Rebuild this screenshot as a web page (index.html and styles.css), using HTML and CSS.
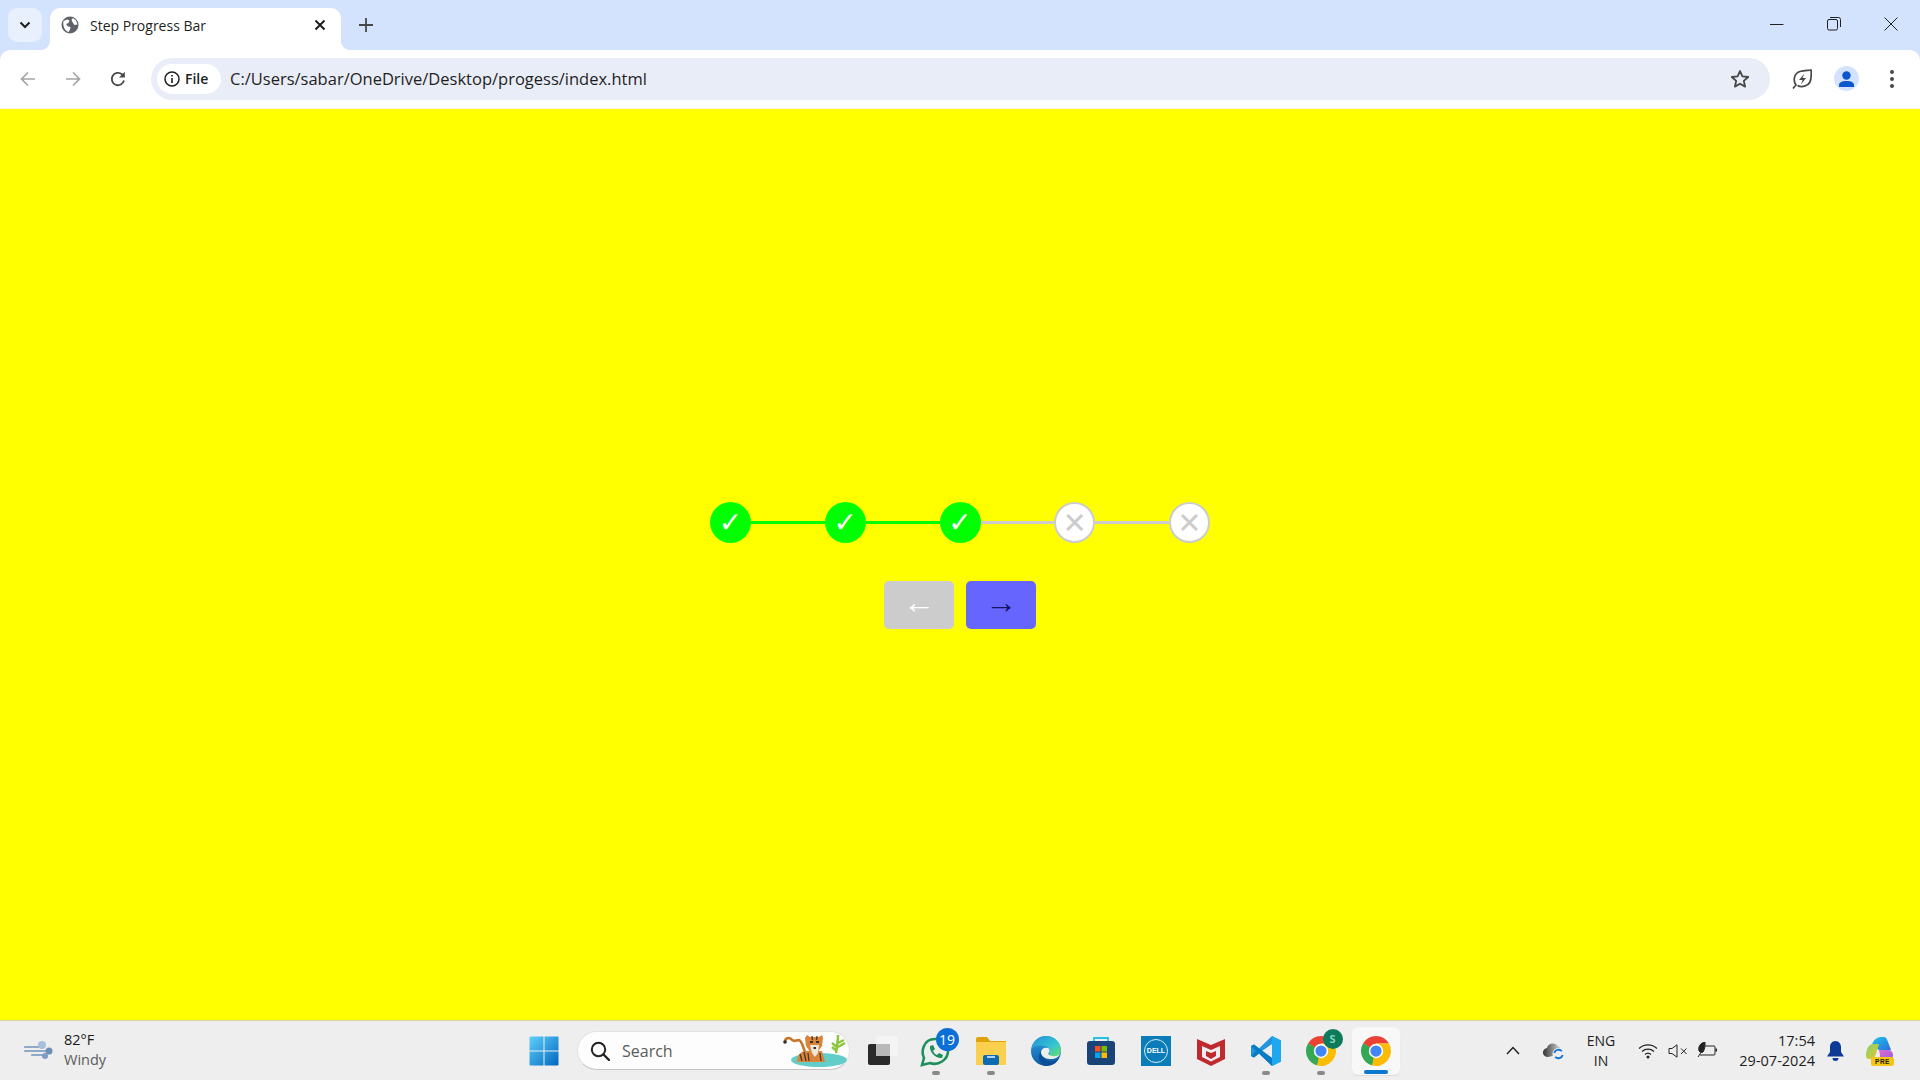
FILE: index.html
```html
<!DOCTYPE html>
<html lang="en">
<head>
<meta charset="utf-8">
<title>Step Progress Bar</title>
<link rel="stylesheet" href="styles.css">
</head>
<body>
<div class="window">
  <div class="browser-top">
  <header class="titlebar">
    <button class="tab-search"><svg width="12" height="8" viewBox="0 0 12 8"><path d="M1.500 1.500 6 6l4.500-4.500" fill="none" stroke="#1f1f1f" stroke-width="2"/></svg></button>
    <div class="tab">
      <svg class="globe" width="18" height="18" viewBox="0 0 18 18"><circle cx="9" cy="9" r="8.500" fill="#5f6368"/><path d="M2.500 5 6 3.500l2.500 1-1 2.500-2.500 1 2 2.500 2.500.5-.5 2.500-1.500 2.500C4 15 1.500 10 2.500 5ZM12 2l3 2.500 1.500 4-3 .5-1.500-2L10.500 4Z" fill="#fff"/></svg>
      <span class="tab-title">Step Progress Bar</span>
      <svg class="tab-x" width="12" height="12" viewBox="0 0 12 12"><path d="M1.500 1.500l9 9m0-9-9 9" stroke="#1f1f1f" stroke-width="2"/></svg>
    </div>
    <svg class="newtab" width="14" height="14" viewBox="0 0 14 14"><path d="M7 0v14M0 7h14" stroke="#444746" stroke-width="1.800"/></svg>
    <div class="win-controls">
      <svg width="14" height="14" viewBox="0 0 14 14"><path d="M0 7.500h13.500" stroke="#222" stroke-width="1"/></svg>
      <svg width="14" height="14" viewBox="0 0 14 14"><rect x=".5" y="2.500" width="10" height="10.500" rx="1.500" fill="none" stroke="#222"/><path d="M3 .5h8.500a2 2 0 0 1 2 2V10" fill="none" stroke="#222"/></svg>
      <svg width="14" height="14" viewBox="0 0 14 14"><path d="M.5.5l13 13m0-13-13 13" stroke="#222" stroke-width="1"/></svg>
    </div>
  </header>
  <nav class="toolbar">
    <svg class="nav-ico" width="16" height="16" viewBox="0 0 16 16"><path d="M15 8H2M8 1.500 1.500 8 8 14.500" fill="none" stroke="#a3a5a8" stroke-width="1.700"/></svg>
    <svg class="nav-ico" width="16" height="16" viewBox="0 0 16 16"><path d="M1 8h13M8 1.500 14.500 8 8 14.500" fill="none" stroke="#a3a5a8" stroke-width="1.700"/></svg>
    <svg class="nav-ico" width="16" height="16" viewBox="0 0 16 16"><path d="M14 9.500A6.200 6.200 0 1 1 12 3.300L14 5.500" fill="none" stroke="#474747" stroke-width="1.800"/><path d="M14.800 .8v5.700H9z" fill="#474747"/></svg>
    <div class="omnibox">
      <div class="chip">
        <svg width="16" height="16" viewBox="0 0 16 16"><circle cx="8" cy="8" r="7" fill="none" stroke="#1f1f1f" stroke-width="1.500"/><path d="M8 7v5M8 4v1.600" stroke="#1f1f1f" stroke-width="1.600"/></svg>
        <span>File</span>
      </div>
      <span class="url">C:/Users/sabar/OneDrive/Desktop/progess/index.html</span>
      <svg class="star" width="20" height="20" viewBox="0 0 20 20"><path d="M10 2l2.400 5.400 5.800.6-4.400 3.900 1.300 5.700L10 14.700 4.900 17.600l1.300-5.700L1.800 8l5.800-.6z" fill="none" stroke="#474747" stroke-width="1.800" stroke-linejoin="round"/></svg>
    </div>
    <div class="tool-icons">
      <svg width="20" height="20" viewBox="0 0 20 20"><path d="M1 19.500l3-3.500C.5 11 2.500 4 8 2.500c3.500-1 7-1 11-1.500.5 4 .5 8-1 12-2 4-8 6-12.500 3.500" fill="none" stroke="#474747" stroke-width="1.700"/><path d="M12.500 4.500 7 11h3.500L9 15.500l5-6.500h-3.500z" fill="#474747"/></svg>
      <div class="avatar"><svg width="17" height="16" viewBox="0 0 17 16"><circle cx="8.500" cy="4.500" r="4.200" fill="#0b57d0"/><path d="M1 16v-2c0-2.500 3-4 7.500-4s7.500 1.500 7.500 4v2z" fill="#0b57d0"/></svg></div>
      <svg class="menu-dots" width="6" height="20" viewBox="0 0 6 20"><circle cx="3" cy="3" r="2" fill="#474747"/><circle cx="3" cy="10" r="2" fill="#474747"/><circle cx="3" cy="17" r="2" fill="#474747"/></svg>
    </div>
  </nav>
  </div>
  <main class="page">
    <div class="stepper">
      <div class="step done"><span>✓</span></div>
      <div class="line on"></div>
      <div class="step done"><span>✓</span></div>
      <div class="line on"></div>
      <div class="step done"><span>✓</span></div>
      <div class="line"></div>
      <div class="step todo"><span>✕</span></div>
      <div class="line"></div>
      <div class="step todo"><span>✕</span></div>
    </div>
    <div class="buttons">
      <button class="btn prev">←</button>
      <button class="btn next">→</button>
    </div>
  </main>
  <footer class="taskbar">
    <div class="weather">
      <svg width="30" height="20" viewBox="0 0 30 20"><path d="M1 7h15M1 11h26M8 15h12" stroke="#8fa9c9" stroke-width="2.200" stroke-linecap="round"/><circle cx="18" cy="5" r="4" fill="#a6bfdc"/><circle cx="25" cy="11" r="3.500" fill="#6d8fb5"/><circle cx="21" cy="16" r="3" fill="#7f9dc0"/></svg>
      <div class="weather-text"><span class="temp">82°F</span><span class="cond">Windy</span></div>
    </div>
    <div class="center">
      <div class="tb-item">
        <svg width="30" height="30" viewBox="0 0 30 30"><defs><linearGradient id="w" x1="0" y1="0" x2="1" y2="1"><stop offset="0" stop-color="#5fd0fb"/><stop offset="1" stop-color="#0067c0"/></linearGradient></defs><path d="M.5 1.500a1 1 0 0 1 1-1h13v14H.5zM15.500.5h13a1 1 0 0 1 1 1v13h-14zM.5 15.500h14v14h-13a1 1 0 0 1-1-1zM15.500 15.500h14v13a1 1 0 0 1-1 1h-13z" fill="url(#w)"/></svg>
      </div>
      <div class="search">
        <svg width="20" height="20" viewBox="0 0 20 20"><circle cx="8.500" cy="8.500" r="6.700" fill="none" stroke="#222" stroke-width="2"/><path d="M13.500 13.500 19 19" stroke="#222" stroke-width="2.400" stroke-linecap="round"/></svg>
        <span>Search</span>
        <svg class="tiger" width="66" height="34" viewBox="0 0 66 34"><ellipse cx="38" cy="27" rx="28" ry="7" fill="#62cdc9"/><path d="M55 20c1-6 2-12 2-18M57 10l6-3M57 14l7-4M56 14l-5-4M56 18l-5-4" stroke="#8cc63f" stroke-width="2.500" fill="none"/><path d="M4 9c0-4 4-5 6-3 3 4 5 1 8 1 3 1 4 7 6 12" fill="none" stroke="#c9762c" stroke-width="2.600"/><circle cx="4" cy="9" r="1.800" fill="#33302e"/><path d="M16 29c0-7 4-11 9-11h16l3 11z" fill="#d9843a"/><path d="M26 2l3 2h9l3-2 1 3-1 8-5 7h-6l-5-7-1-8z" fill="#d9843a"/><path d="M29 12h9l-1 8-3 4-3-4z" fill="#eee7dc"/><path d="M29 8h3v2h-3zM35 8h3v2h-3zM32.500 14h2.500v2h-2.500z" fill="#33302e"/><path d="M19 21l2 7M23 19l2 9M27 20l1 8M39 20l1 8M31 3l.5 4M36 3l-.5 4" stroke="#4a3a2a" stroke-width="1.300"/></svg>
      </div>
      <div class="tb-item taskview">
        <svg width="30" height="30" viewBox="0 0 30 30"><rect x="8" y="0" width="22" height="20" rx="2" fill="#f4f4f4"/><rect x="0" y="8" width="22" height="21" rx="2" fill="#2a2a2a"/><rect x="8" y="8" width="14" height="12" fill="#b8b8b8"/></svg>
      </div>
      <div class="tb-item pinned">
        <svg width="32" height="32" viewBox="0 0 32 32"><path d="M2 30l2-7C1 17 3 4 15 4c8 0 13 6 13 12 0 9-10 15-18 12z" fill="#eeeeee" stroke="#1d8f5b" stroke-width="2.600"/><path d="M10 11l3-1 2 4-2 2c1 2 2 3 4 4l2-2 4 2-1 3c-6 1-13-6-12-12z" fill="#1d8f5b"/></svg>
        <span class="badge">19</span>
        <i class="dot"></i>
      </div>
      <div class="tb-item pinned">
        <svg width="30" height="28" viewBox="0 0 30 28"><path d="M0 2a2 2 0 0 1 2-2h9l3 4h16v3H0z" fill="#e1a10d"/><path d="M0 5h30v23H0z" fill="#fcd04f"/><rect x="7" y="18" width="16" height="10" rx="2" fill="#0d6bb2"/><path d="M11 20h8" stroke="#eef5fb" stroke-width="1.500"/></svg>
        <i class="dot"></i>
      </div>
      <div class="tb-item">
        <svg width="30" height="30" viewBox="0 0 30 30"><defs><linearGradient id="e1" x1="0" y1="0" x2="1" y2="1"><stop offset="0" stop-color="#1f8fd8"/><stop offset=".6" stop-color="#37c6d0"/><stop offset="1" stop-color="#6ee05a"/></linearGradient><linearGradient id="e2" x1="0" y1="0" x2="0" y2="1"><stop offset="0" stop-color="#2f9fe0"/><stop offset="1" stop-color="#0a5ea8"/></linearGradient></defs><circle cx="15" cy="15" r="15" fill="url(#e2)"/><path d="M.5 13C2 5 8 0 15 0c9 0 15 7 15 14 0 5-4 7-8 7-3 0-5-1-5-2 3-2 2-8-3-9C9 9 3 9 .5 13z" fill="url(#e1)"/><path d="M10 15c0 6 5 10 10 10 3 0 6-1 8-3-2 5-7 8-13 8-3 0-5-2-6-4-2-4-1-9 1-11z" fill="#0d4f96"/><path d="M10 17c0-4 3-6 7-5 2 1 2 4 0 6 3 3 9 3 12 0-1 3-5 5-9 5-5 0-9-2-10-6z" fill="#eeeeee"/></svg>
      </div>
      <div class="tb-item">
        <svg width="30" height="30" viewBox="0 0 30 30"><path d="M8 5V2h14v3" fill="none" stroke="#27c1e8" stroke-width="1.800"/><path d="M1 8a3 3 0 0 1 3-3h22a3 3 0 0 1 3 3v18a3 3 0 0 1-3 3H4a3 3 0 0 1-3-3z" fill="#1a4478"/><rect x="9" y="10" width="5.500" height="5.500" fill="#f25022"/><rect x="15.500" y="10" width="5.500" height="5.500" fill="#7fba00"/><rect x="9" y="16.500" width="5.500" height="5.500" fill="#00a4ef"/><rect x="15.500" y="16.500" width="5.500" height="5.500" fill="#ffb900"/></svg>
      </div>
      <div class="tb-item">
        <div class="dell"><span>DELL</span></div>
      </div>
      <div class="tb-item">
        <svg width="28" height="30" viewBox="0 0 28 30"><path d="M0 3l14 6 14-6v20l-14 7L0 23z" fill="#c02a2e"/><path d="M5 10l9 4 9-4v11l-9 4.500L5 21z" fill="#eeeeee"/><path d="M9 15l5 2 5-2v5l-5 3-5-3z" fill="#c02a2e"/></svg>
      </div>
      <div class="tb-item pinned">
        <svg width="30" height="30" viewBox="0 0 30 30"><path d="M21 0l9 4.500v21L21 30 8 17.500 3 21.500 0 20V10l3-1.500 5 4z" fill="#2195e0"/><path d="M21 0l9 4.500v21L21 30z" fill="#1fa8f0"/><path d="M21 8 11 15l10 7z" fill="#eeeeee"/><path d="M0 10l3-1.500L21 22v8L8 17.500 3 21.500 0 20l5-5z" fill="#0a7cc6"/></svg>
        <i class="dot"></i>
      </div>
      <div class="tb-item pinned">
        <svg class="chrome" width="30" height="30" viewBox="0 0 48 48"><use href="#chrome-art"/></svg>
        <span class="s-badge">S</span>
        <i class="dot"></i>
      </div>
      <div class="tb-item active">
        <svg class="chrome" width="30" height="30" viewBox="0 0 48 48"><g id="chrome-art"><path d="M24 24 3.200 12A24 24 0 0 1 24 0c9 0 17 5 20.800 12H24z" fill="#ea4335"/><path d="M3.200 12A24 24 0 0 0 18 47.200L24 24z" fill="#34a853"/><path d="M44.800 12H24l-6 35.200A24 24 0 0 0 44.800 12z" fill="#fbbc04"/><path d="M3.200 12 14 30.500 24 24z" fill="#34a853"/><circle cx="24" cy="24" r="11.500" fill="#fff"/><circle cx="24" cy="24" r="9" fill="#4285f4"/></g></svg>
        <i class="bar"></i>
      </div>
    </div>
    <div class="tray">
      <svg class="t-chev" width="14" height="9" viewBox="0 0 14 9"><path d="M1 8l6-6.500L13 8" fill="none" stroke="#222" stroke-width="1.500"/></svg>
      <svg class="t-cloud" width="22" height="18" viewBox="0 0 22 18"><defs><linearGradient id="cl" x1="0" y1="0" x2="1" y2="0"><stop offset="0" stop-color="#333"/><stop offset="1" stop-color="#d8d8d8"/></linearGradient></defs><path d="M5 15a4.500 4.500 0 0 1-1-9 6 6 0 0 1 11-1.500c3 0 4 4 1 8z" fill="url(#cl)"/><circle cx="15.500" cy="12" r="6" fill="#eeeeee"/><path d="M11.300 11a4.400 4.400 0 0 1 7.500-1.800M19.700 13a4.400 4.400 0 0 1-7.500 1.800" fill="none" stroke="#0f74d8" stroke-width="1.800"/></svg>
      <div class="lang"><span>ENG</span><span>IN</span></div>
      <svg class="t-wifi" width="20" height="16" viewBox="0 0 20 16"><path d="M1 5.500a13 13 0 0 1 18 0M4 8.500a9 9 0 0 1 12 0M7 11.500a4.500 4.500 0 0 1 6 0" fill="none" stroke="#222" stroke-width="1.200"/><circle cx="10" cy="14" r="1.500" fill="#222"/></svg>
      <svg class="t-vol" width="20" height="14" viewBox="0 0 20 14"><path d="M1 4.500h3L9 .8v12.400L4 9.500H1z" fill="none" stroke="#222" stroke-width="1"/><path d="M13 4.500l5.500 5.500m0-5.500L13 10" stroke="#222" stroke-width="1"/></svg>
      <svg class="t-bat" width="20" height="17" viewBox="0 0 20 17"><path d="M8 4h9a1 1 0 0 1 1 1v7a1 1 0 0 1-1 1H3" fill="none" stroke="#222"/><path d="M18.500 6.500H20v3h-1.500z" fill="#222"/><path d="M8 0C3 1 1 5 2 9c1 1.500 3 1.500 4 1 2-3 2-6 2-10zM1 15l4-6" fill="#222" stroke="#222"/></svg>
      <div class="clock"><span>17:54</span><span>29-07-2024</span></div>
      <svg class="t-bell" width="17" height="20" viewBox="0 0 17 20"><path d="M8.500 0c-3.500 0-5.500 3-5.500 6v5L0 15.500h17L14 11V6c0-3-2-6-5.500-6z" fill="#0d3a94"/><path d="M5.500 17a3 3 0 0 0 6 0z" fill="#0d3a94"/></svg>
      <svg class="t-copilot" width="30" height="30" viewBox="0 0 30 30"><defs><linearGradient id="c1" x1="0" y1="0" x2="1" y2="1"><stop offset="0" stop-color="#20c4e8"/><stop offset="1" stop-color="#2a6fe0"/></linearGradient><linearGradient id="c2" x1="0" y1="0" x2="1" y2="1"><stop offset="0" stop-color="#7bd46a"/><stop offset="1" stop-color="#f2c230"/></linearGradient><linearGradient id="c3" x1="0" y1="0" x2="1" y2="1"><stop offset="0" stop-color="#e56bd0"/><stop offset="1" stop-color="#8f5ce0"/></linearGradient></defs><path d="M7 9c1-5 5-8 9-8h3c2 0 3 2 4 5l3 8H14z" fill="url(#c1)"/><path d="M1 20C1 13 4 8 8 8h6l-3 10c-1 3-3 6-6 5-3 0-4-1-4-3z" fill="url(#c2)"/><path d="M14 14h9c3 0 5 2 5 5 0 5-4 7-8 7h-7c3-3 2-8 1-12z" fill="url(#c3)"/><rect x="6" y="21" width="23" height="9" rx="2.500" fill="#f5c518"/><text x="17.500" y="28.300" class="pre">PRE</text></svg>
    </div>
  </footer>
</div>
</body>
</html>
```

FILE: styles.css
```css
* { box-sizing: border-box; margin: 0; padding: 0; }
html, body { width: 100%; height: 100%; overflow: hidden; }
body { font-family: "Open Sans", "Noto Sans", sans-serif; color: #1f1f1f; }
svg { display: block; flex: none; }

.window { display: flex; flex-direction: column; height: 1080px; background: #ffff00; }
.browser-top { flex: none; background: #d3e3fd; }

.titlebar { height: 50px; display: flex; align-items: flex-start; padding: 8px 0 0 8px; }
.tab-search { width: 34px; height: 34px; border: 0; border-radius: 9px; background: #e9f0fd; display: flex; align-items: center; justify-content: center; }
.tab { width: 291px; height: 42px; margin: 0 0 0 8px; background: #fff; border-radius: 10px 10px 0 0; display: flex; align-items: center; padding: 0 15px 8px 11px; position: relative; }
.tab::before, .tab::after { content: ""; position: absolute; bottom: 0; width: 10px; height: 10px; }
.tab::before { left: -10px; background: radial-gradient(circle at 0 0, #d3e3fd 10px, #fff 10.500px); }
.tab::after { right: -10px; background: radial-gradient(circle at 100% 0, #d3e3fd 10px, #fff 10.500px); }
.globe { margin-right: 11px; }
.tab-title { font-size: 14px; color: #1f1f1f; flex: 1; white-space: nowrap; }
.newtab { margin: 10px 0 0 18px; }
.win-controls { margin-left: auto; display: flex; gap: 43px; padding: 9px 22px 0 0; }

.toolbar { height: 59px; background: #fff; border-radius: 10px 10px 0 0; display: flex; align-items: center; padding: 0 25px 1px 20px; border-bottom: 1px solid #f4f4e0; }
.nav-ico { margin-right: 29px; }
.omnibox { flex: 1; margin-left: -4px; height: 42px; border-radius: 21px; background: #e9edf7; display: flex; align-items: center; padding: 0 20px 0 6px; }
.chip { width: 64px; height: 30px; border-radius: 15px; background: #fff; display: flex; align-items: center; gap: 5px; padding-left: 7px; font-size: 14px; font-weight: 600; }
.url { font-size: 16.500px; margin-left: 9px; flex: 1; white-space: nowrap; color: #1f1f1f; }
.tool-icons { display: flex; align-items: center; margin-left: 22px; gap: 22px; }
.menu-dots { margin-left: 8px; }
.avatar { width: 25px; height: 25px; border-radius: 50%; background: #d3e3fd; display: flex; align-items: flex-end; justify-content: center; padding-bottom: 4px; }

.page { flex: 1; display: flex; flex-direction: column; align-items: center; justify-content: flex-start; padding-top: 393px; gap: 38px; background: #ffff00; }
.stepper { width: 500px; display: flex; align-items: center; }
.step { width: 41px; height: 41px; flex: none; border-radius: 50%; display: flex; align-items: center; justify-content: center; padding-top: 1px; font-family: "DejaVu Sans", sans-serif; line-height: 1; }
.step.done { background: #00ff00; color: #fff; font-size: 28px; }
.step.todo { background: #fff; border: 2px solid #cccccc; color: #cccccc; font-size: 29px; }
.line { flex: 1; height: 3px; background: #cccccc; }
.line.on { background: #00ff00; }
.buttons { display: flex; gap: 12px; }
.btn { width: 70px; height: 48px; border: 0; border-radius: 5px; padding-bottom: 6px; font-family: "Liberation Sans", sans-serif; font-size: 32px; line-height: 1; }
.btn.prev { background: #cccccc; color: #fff; }
.btn.next { background: #6666ff; color: #14145f; }

.taskbar { height: 60px; flex: none; background: #eeeeee; border-top: 1px solid #d4d4a8; display: flex; align-items: center; }
.weather { width: 516px; flex: none; display: flex; align-items: center; padding: 0 0 2px 24px; gap: 10px; }
.weather-text { display: flex; flex-direction: column; font-size: 14.500px; line-height: 20px; }
.temp { color: #1b1b1b; }
.cond { color: #5c5c5c; }

.center { display: flex; align-items: center; height: 100%; }
.tb-item { width: 55px; height: 59px; display: flex; align-items: center; justify-content: center; position: relative; flex: none; }
.tb-item.taskview { width: 51px; }
.search { width: 273px; height: 39px; margin: 0 7.500px 0 6px; border-radius: 20px; background: #fdfdfd; border: 1px solid #e2e2e2; border-bottom-color: #c4c4c4; display: flex; align-items: center; padding-left: 12px; position: relative; font-size: 16px; color: #5a5a5a; }
.search span { margin-left: 12px; }
.tiger { position: absolute; right: 2px; bottom: 2px; }
.badge { position: absolute; top: 7px; right: 5px; width: 23px; height: 23px; border-radius: 50%; background: #0b6fd6; color: #fff; font-size: 14px; line-height: 23px; text-align: center; }
.s-badge { position: absolute; top: 8px; right: 6px; width: 20px; height: 20px; border-radius: 50%; background: #0e7a5c; color: #7fd8b8; font-size: 11px; font-weight: 700; line-height: 20px; text-align: center; }
.dot { position: absolute; bottom: 5px; left: 50%; margin-left: -4px; width: 8px; height: 4px; border-radius: 2px; background: #8a8a8a; }
.dell { width: 30px; height: 30px; background: #0a7cba; display: flex; align-items: center; justify-content: center; }
.dell span { width: 24px; height: 24px; border: 1px solid #d8ecf6; border-radius: 50%; color: #fff; font: 700 7px/22px "Liberation Sans", sans-serif; text-align: center; }
.tb-item.active { width: 48px; height: 48px; margin-left: 3px; background: #f8f8f8; border-radius: 6px; box-shadow: 0 1px 1px #dcdcdc; }
.bar { position: absolute; bottom: 1px; left: 50%; margin-left: -12px; width: 24px; height: 4px; border-radius: 2px; background: #0b78d0; }

.tray { margin-left: auto; display: flex; align-items: center; height: 100%; padding-right: 25px; }
.t-cloud { margin-left: 23px; }
.lang { margin-left: 20px; width: 32px; display: flex; flex-direction: column; align-items: center; font-size: 14px; line-height: 20px; color: #1f1f1f; }
.t-wifi { margin-left: 21px; }
.t-vol { margin-left: 10px; }
.t-bat { margin-left: 9px; }
.clock { margin-left: 18px; width: 80px; display: flex; flex-direction: column; align-items: flex-end; font-size: 14.500px; line-height: 20px; color: #1f1f1f; }
.t-bell { margin-left: 12px; }
.t-copilot { margin-left: 21px; }
.pre { font: 800 6.500px "Liberation Sans", sans-serif; text-anchor: middle; fill: #1a1a1a; letter-spacing: .5px; }
```
